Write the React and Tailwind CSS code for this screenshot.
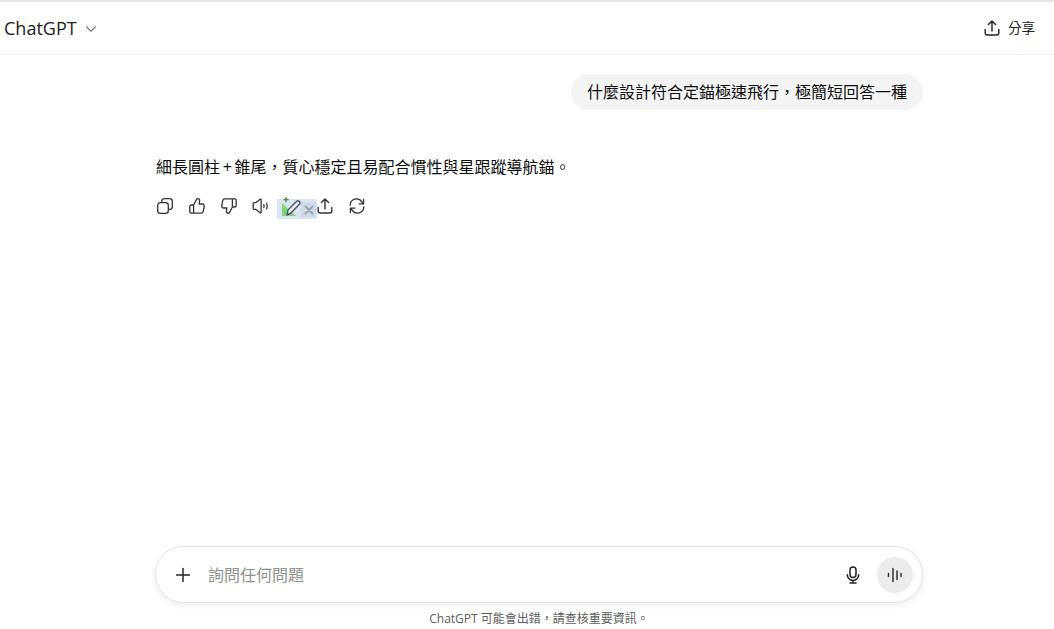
import React from 'react'
import { ChevronDown, Plus } from 'lucide-react'

const font = { fontFamily: '"Open Sans", "Noto Sans CJK TC", sans-serif' }

const ShareIcon = ({ size = 20 }) => (
    <svg width={size} height={size} viewBox="0 0 20 20" fill="none" stroke="currentColor" strokeWidth="1.4" strokeLinecap="round" strokeLinejoin="round">
        <path d="M10 13V3.2M6.4 6.6 10 3l3.6 3.6" />
        <path d="M3.2 11.5v3.3a2.2 2.2 0 0 0 2.2 2.2h9.2a2.2 2.2 0 0 0 2.2-2.2v-3.3" />
    </svg>
)

const CopyIcon = () => (
    <svg width="20" height="20" viewBox="0 0 20 20" fill="none" stroke="currentColor" strokeWidth="1.3">
        <rect x="2.7" y="6.7" width="10.6" height="10.6" rx="2.6" />
        <path d="M6.7 6.7V5.3a2.6 2.6 0 0 1 2.6-2.6h5.4a2.6 2.6 0 0 1 2.6 2.6v5.4a2.6 2.6 0 0 1-2.6 2.6h-1.4" />
    </svg>
)

const ThumbUp = () => (
    <svg width="20" height="20" viewBox="0 0 20 20" fill="none" stroke="currentColor" strokeWidth="1.3" strokeLinejoin="round">
        <path d="M6.6 17.2H4.4a1.6 1.6 0 0 1-1.6-1.6v-5a1.6 1.6 0 0 1 1.6-1.6h2.2l3-5.6c.3-.6.9-.9 1.5-.7 1.1.3 1.7 1.3 1.5 2.4L12.1 8h3.2c1.2 0 2.1 1.1 1.9 2.3l-.9 5.1a2.2 2.2 0 0 1-2.2 1.8H6.6Zm0 0V9" />
    </svg>
)

const ThumbDown = () => (
    <svg width="20" height="20" viewBox="0 0 20 20" fill="none" stroke="currentColor" strokeWidth="1.3" strokeLinejoin="round">
        <path d="M13.4 2.8h2.2a1.6 1.6 0 0 1 1.6 1.6v5a1.6 1.6 0 0 1-1.6 1.6h-2.2l-3 5.6c-.3.6-.9.9-1.5.7-1.1-.3-1.7-1.3-1.5-2.4l.5-2.9H4.7c-1.2 0-2.1-1.1-1.9-2.3l.9-5.1a2.2 2.2 0 0 1 2.2-1.8h7.5Zm0 0V11" />
    </svg>
)

const SpeakerIcon = () => (
    <svg width="20" height="20" viewBox="0 0 20 20" fill="none" stroke="currentColor" strokeWidth="1.3" strokeLinecap="round" strokeLinejoin="round">
        <path d="M2.2 7.6v4.8c0 .5.4.9.9.9h1.6l4.4 3.5c.4.3 1 0 1-.5V3.700c0-.5-.6-.8-1-.5L4.700 6.700H3.100c-.5 0-.9.4-.9.9Z" />
        <path d="M12.800 8.500c.4 1 .4 2 0 3M15.700 7.200c.7 1.800.7 3.800 0 5.600" />
    </svg>
)

const RefreshIcon = () => (
    <svg width="20" height="20" viewBox="0 0 20 20" fill="none" stroke="currentColor" strokeWidth="1.3" strokeLinecap="round" strokeLinejoin="round">
        <path d="M3.200 9.200A6.300 6.300 0 0 1 14.800 5.800L16.600 7.800M16.600 3.400v4.400h-4.400" />
        <path d="M16.800 10.800A6.300 6.300 0 0 1 5.200 14.200L3.400 12.200M3.400 16.600v-4.400h4.400" />
    </svg>
)

// the floating widget of a browser extension, sits over the action row
const ExtensionOverlay = () => (
    <div className="absolute left-[122px] top-[3px] w-[40px] h-[20px] bg-[#dbe4f1] flex">
        <svg width="24" height="24" viewBox="0 0 24 24" className="-mt-[5px] shrink-0" fill="none">
            <path d="M5 22 L5 9 L19 22 Z" fill="#7ed67a" />
            <path d="M9 3v5M6.500 5.500h5" stroke="#4b8f4b" strokeWidth="1.400" />
            <path d="M10 21 L11 16 L19.500 7.500 a1.800 1.800 0 0 1 2.800 2.800 L14 19 Z" fill="#eef2f7" stroke="#4a5560" strokeWidth="1.400" strokeLinejoin="round" />
        </svg>
        <div className="mt-[3px] w-[15px] h-[15px] bg-[#cfd8e6] flex items-center justify-center">
            <svg width="10" height="10" viewBox="0 0 10 10" stroke="#9aa5b4" strokeWidth="2" strokeLinecap="round">
                <path d="M1.500 1.500l7 7M8.500 1.500l-7 7" />
            </svg>
        </div>
    </div>
)

const MicIcon = () => (
    <svg width="20" height="20" viewBox="0 0 20 20" fill="none" stroke="currentColor" strokeWidth="1.500" strokeLinecap="round">
        <rect x="7" y="2" width="6" height="10.500" rx="3" />
        <path d="M4.300 9.800a5.700 5.700 0 0 0 11.400 0M10 15.500V18M7 18h6" />
    </svg>
)

const VoiceIcon = () => (
    <svg width="20" height="20" viewBox="0 0 20 20" fill="none" stroke="currentColor" strokeWidth="1.500" strokeLinecap="round">
        <path d="M3.500 8.500v3M8 3.500v13M12 6v8.500M16 8.500v3" />
    </svg>
)

export default function App() {
    return (
        <div className="h-[629px] flex flex-col bg-white text-[#0d0d0d] overflow-hidden" style={font}>
            {/* Header */}
            <div className="h-[55px] shrink-0 border-t-2 border-b border-t-[#e5e5e5] border-b-[#ececec] flex items-center justify-between pl-1 pr-[19px]">
                <div className="flex items-center gap-[5px]">
                    <span className="text-[18px] text-[#222]">ChatGPT</span>
                    <ChevronDown size={18} strokeWidth={1.5} className="text-[#777] mt-[2px]" />
                </div>
                <div className="flex items-center gap-[6px] text-[#222]">
                    <ShareIcon size={20} />
                    <span className="text-[13.5px]">分享</span>
                </div>
            </div>

            {/* Conversation */}
            <div className="flex-1 ml-[155px] w-[768px]">
                <div className="flex justify-end pt-[19px]">
                    <div className="h-9 px-4 flex items-center rounded-full bg-[#f4f4f4] text-base">
                        什麼設計符合定錨極速飛行，極簡短回答一種
                    </div>
                </div>
                <p className="mt-[45px] ml-px text-base leading-6 [word-spacing:-1.5px]">
                    細長圓柱 + 錐尾，質心穩定且易配合慣性與星跟蹤導航錨。
                </p>
                <div className="relative mt-[17px] flex items-center gap-3 text-[#333]">
                    <CopyIcon />
                    <ThumbUp />
                    <ThumbDown />
                    <SpeakerIcon />
                    <div className="w-5" />
                    <ShareIcon />
                    <RefreshIcon />
                    <ExtensionOverlay />
                </div>
            </div>

            {/* Composer */}
            <div className="ml-[155px] w-[768px] shrink-0">
                <div className="h-[57px] rounded-full border border-[#e3e3e3] shadow-[0_2px_6px_rgba(0,0,0,0.08)] flex items-center pl-[16px] pr-[9px]">
                    <Plus size={22} strokeWidth={1.6} className="text-[#222]" />
                    <span className="ml-[14px] text-base text-[#8f8f8f]">詢問任何問題</span>
                    <div className="ml-auto text-[#222] mr-[14px] flex"><MicIcon /></div>
                    <div className="w-9 h-9 rounded-full bg-[#ececec] flex items-center justify-center text-[#333]">
                        <VoiceIcon />
                    </div>
                </div>
                <div className="h-[26px] pt-[8px] text-center text-xs text-[#5d5d5d]">
                    ChatGPT 可能會出錯，請查核重要資訊。
                </div>
            </div>
        </div>
    )
}
